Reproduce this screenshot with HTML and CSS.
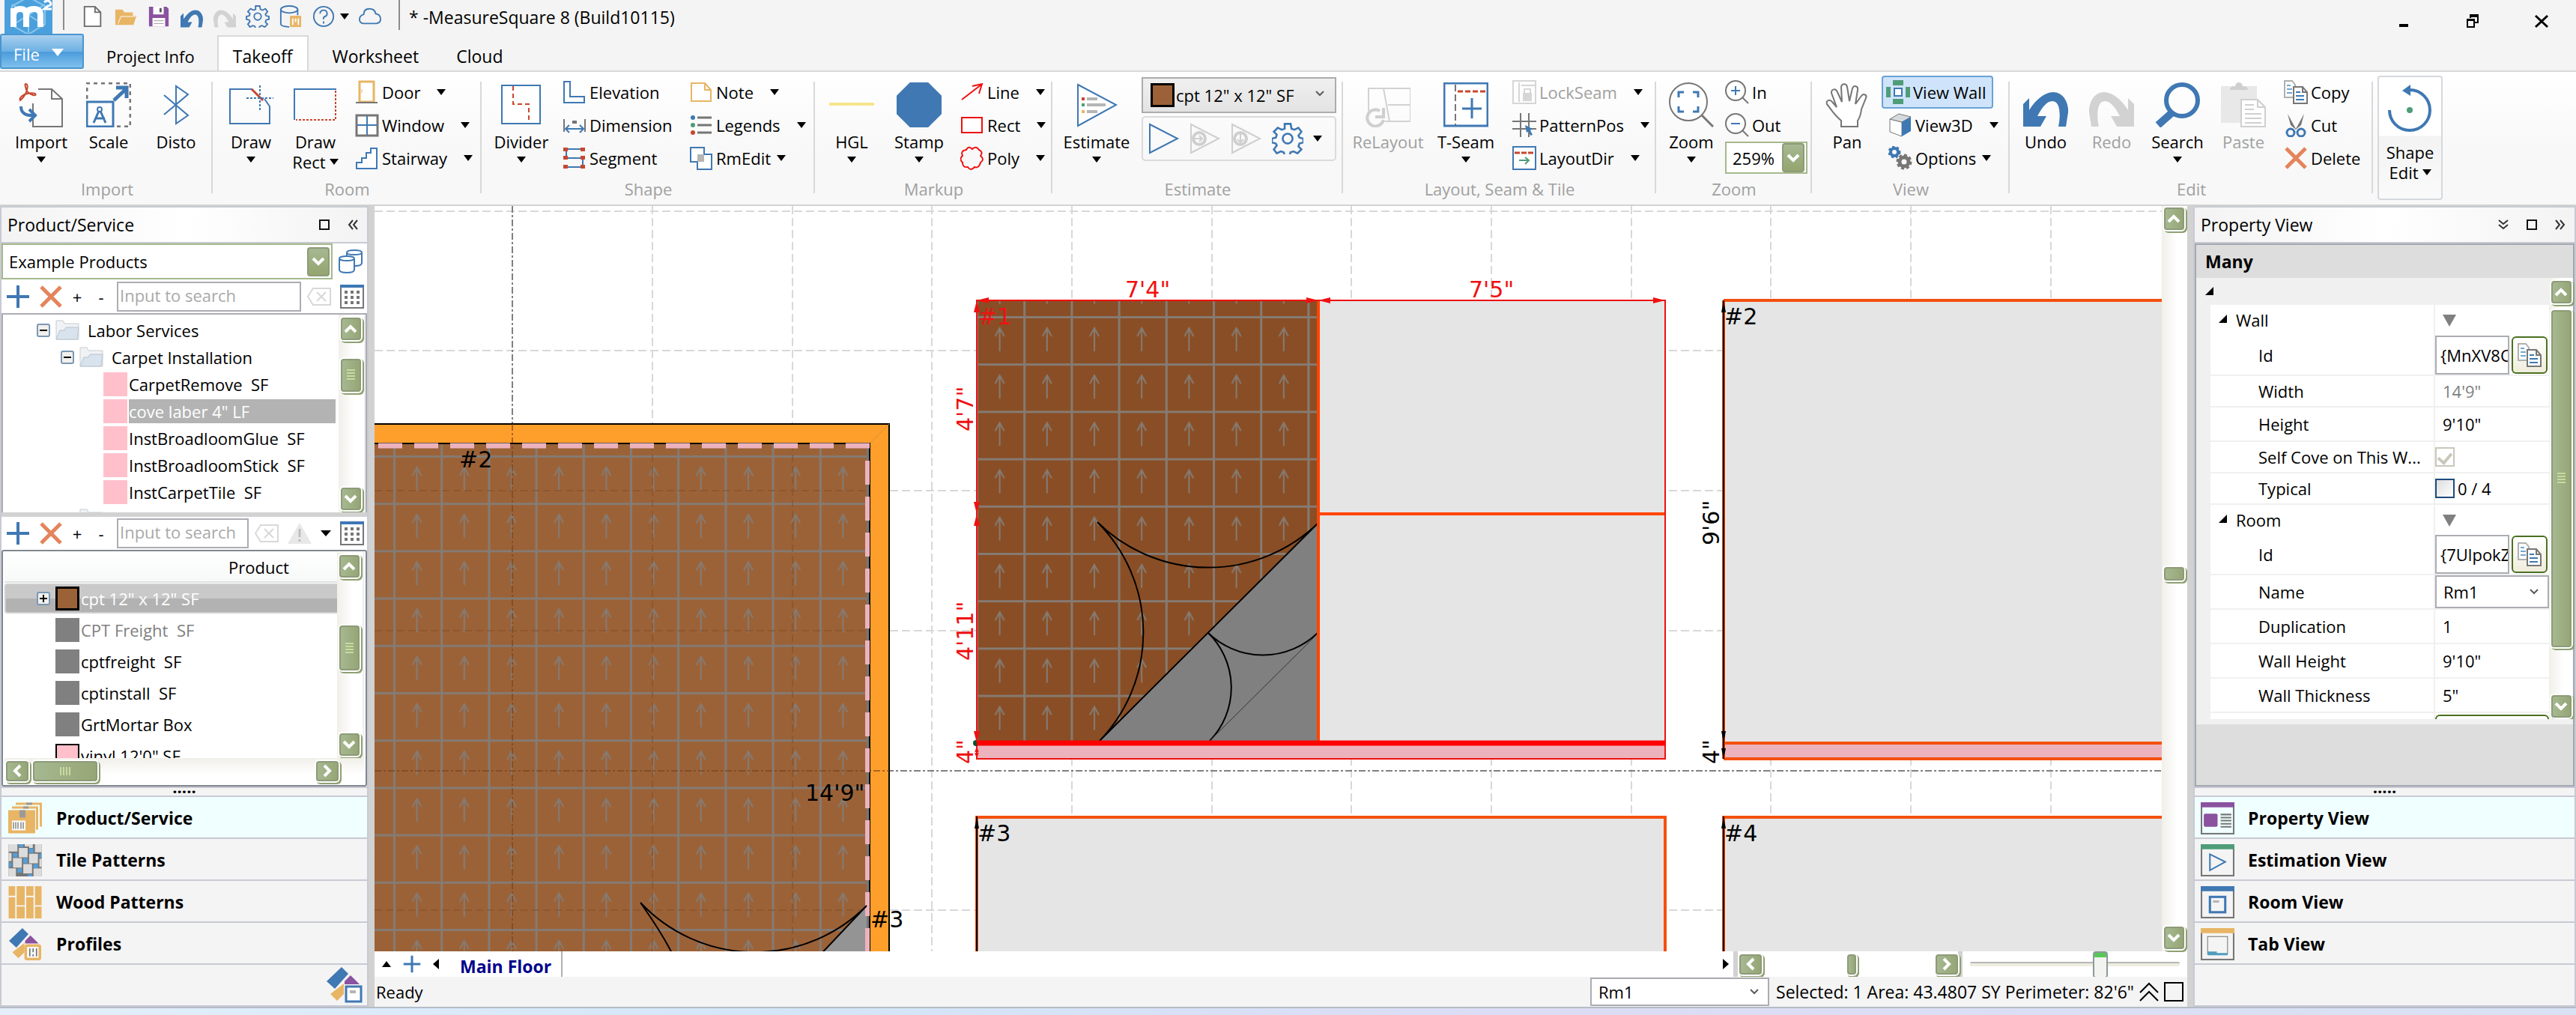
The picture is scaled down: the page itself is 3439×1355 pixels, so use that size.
FILE: index.html
```html
<!DOCTYPE html>
<html lang="en">
<head>
<meta charset="utf-8">
<title>MeasureSquare 8</title>
<link rel="stylesheet" href="styles.css">
</head>
<body>
<svg class="sprite" aria-hidden="true">
  <defs>
    <symbol id="i-logo" viewBox="0 0 64 45"><rect width="64" height="45" fill="#4aa0dc"/><path d="M10 34V8L32-4l22 12v24L32 46zM10 34l44-28M54 34L10 6M32 30v16" fill="none" stroke="#8cc6ec" stroke-width="2"/><path d="M12 36V11M12 20q1-8 9-8t8 8v16M29 20q1-8 10-8t9 8v16" fill="none" stroke="#fff" stroke-width="8"/><path d="M53 3q5-4 8 0t-3 5l-5 4h10" fill="none" stroke="#fff" stroke-width="3"/></symbol>
    <symbol id="i-new" viewBox="0 0 32 32"><path d="M4 2h15l8 8v20H4zM19 2v8h8" fill="#fff" stroke="#6b6b6b" stroke-width="2"/></symbol>
    <symbol id="i-open" viewBox="0 0 32 32"><path d="M1 28V6h10l3 4h12v5h5l-4 13z" fill="#e8b565"/><path d="M5 26l4-10h21" fill="none" stroke="#fff" stroke-width="1"/></symbol>
    <symbol id="i-save" viewBox="0 0 32 32"><path d="M2 2h25l3 3v25H2z" fill="#8a529f"/><path d="M8 2h15v11H8zM7 18h18v12H7z" fill="#fff"/><path d="M17 4h3v6h-3z" fill="#555"/><path d="M9 22h14M9 26h14" stroke="#999" stroke-width="1"/></symbol>
    <symbol id="i-undo" viewBox="0 0 60 60"><path d="M0 53V29l8-8v16C16 24 28 13 40 13c14 0 21 15 20 27l-3 19H47c3-14 3-34-8-34-8 0-14 9-20 20h12l-8 14H0z" fill="#3f78b3"/></symbol>
    <symbol id="i-redo" viewBox="0 0 60 60"><path d="M60 53V29l-8-8v16C44 24 32 13 20 13 6 13-1 28 0 40l3 19h10c-3-14-3-34 8-34 8 0 14 9 20 20H29l8 14h23z" fill="#d2d2d2"/></symbol>
    <symbol id="i-gear" viewBox="0 0 32 32"><path d="M13 1h6l1 5 3 1 4-2 3 4-3 4 1 2 4 1v4l-4 1-1 3 3 3-4 4-4-2-3 1-1 3h-5l-1-3-3-1-4 2-3-4 3-4-1-2-4-1v-4l4-1 1-3-3-3 4-4 4 2 3-1z" fill="none" stroke="#3f78b3" stroke-width="2"/><circle cx="16" cy="16" r="5" fill="none" stroke="#3f78b3" stroke-width="2"/></symbol>
    <symbol id="i-gears" viewBox="0 0 32 32"><circle cx="8" cy="8" r="5" fill="none" stroke="#3f78b3" stroke-width="4"/><circle cx="8" cy="8" r="7" fill="none" stroke="#3f78b3" stroke-width="3" stroke-dasharray="3 3"/><circle cx="21" cy="21" r="6" fill="none" stroke="#767676" stroke-width="5"/><circle cx="21" cy="21" r="9" fill="none" stroke="#767676" stroke-width="3" stroke-dasharray="4 3"/></symbol>
    <symbol id="i-dbcode" viewBox="0 0 32 32"><path d="M2 6v21q0 3 12 4M26 6v8" fill="none" stroke="#3f78b3" stroke-width="2"/><ellipse cx="14" cy="6" rx="12" ry="5" fill="none" stroke="#3f78b3" stroke-width="2"/><rect x="15" y="15" width="16" height="16" fill="#e8b565"/><path d="M19 19v9M23 19v5M27 19v9" stroke="#fff" stroke-width="2"/></symbol>
    <symbol id="i-help" viewBox="0 0 32 32"><circle cx="16" cy="16" r="14" fill="none" stroke="#3f78b3" stroke-width="2"/><path d="M11 12q0-5 5-5t5 5q0 3-3 4t-2 4M16 23v3" fill="none" stroke="#3f78b3" stroke-width="2"/></symbol>
    <symbol id="i-cloud" viewBox="0 0 32 32"><path d="M6 26q-5-1-5-6t6-7q0-8 8-8t9 7q7 1 7 8 0 5-6 6z" fill="none" stroke="#3f78b3" stroke-width="2"/></symbol>
    <symbol id="i-import" viewBox="0 0 60 60"><path d="M26 9h18l14 13v37H19V28M44 9v13h14" fill="none" stroke="#767676" stroke-width="2"/><path d="M9 2q4 0 2 8-2 8-9 14-2-4 6-8 8-3 14-1 2 3-3 2-9-3-10-11-1-4 0-4" fill="none" stroke="#c8472f" stroke-width="2"/><path d="M3 32q0 13 17 12M14 36l8 8-8 8" fill="none" stroke="#3f78b3" stroke-width="4"/></symbol>
    <symbol id="i-scale" viewBox="0 0 60 60"><path d="M1 22V1h58v58H40" fill="none" stroke="#767676" stroke-width="3" stroke-dasharray="5 5"/><rect x="1" y="26" width="35" height="33" fill="#fff" stroke="#3f78b3" stroke-width="3"/><path d="M37 24L52 10M40 7h14v14" fill="none" stroke="#3f78b3" stroke-width="5"/><path d="M10 54l8-18 8 18M12 48h13" fill="none" stroke="#3f78b3" stroke-width="3"/><circle cx="18" cy="36" r="3" fill="#fff" stroke="#3f78b3" stroke-width="2"/></symbol>
    <symbol id="i-bt" viewBox="0 0 60 60"><path d="M14 17l32 27-16 11V5l16 11-32 27" fill="none" stroke="#3f78b3" stroke-width="2"/></symbol>
    <symbol id="i-draw" viewBox="0 0 60 60"><path d="M32 9H2v46h53V32L48 22" fill="none" stroke="#3f78b3" stroke-width="2"/><path d="M31 9l15 15" stroke="#c8472f" stroke-width="3"/><path d="M42 4v34M24 21h36" stroke="#3f78b3" stroke-width="2" stroke-dasharray="3 2"/></symbol>
    <symbol id="i-rect" viewBox="0 0 60 60"><path d="M2 50V9h56" fill="none" stroke="#3f78b3" stroke-width="2"/><path d="M57 11v39H4" fill="none" stroke="#c8472f" stroke-width="2" stroke-dasharray="3 2"/></symbol>
    <symbol id="i-door" viewBox="0 0 32 32"><rect x="6" y="2" width="19" height="27" fill="#fff" stroke="#e8b565" stroke-width="3"/><path d="M9 12v5" stroke="#e8b565"/><path d="M1 30h29" stroke="#767676" stroke-width="2"/></symbol>
    <symbol id="i-window" viewBox="0 0 32 32"><rect x="2" y="3" width="28" height="27" fill="#fff" stroke="#767676" stroke-width="3"/><path d="M16 4v25M3 16h26" stroke="#3f78b3" stroke-width="2"/></symbol>
    <symbol id="i-stair" viewBox="0 0 32 32"><path d="M2 30V22h7v-6h6V9h6V3h8v27z" fill="#fff" stroke="#3f78b3" stroke-width="2"/></symbol>
    <symbol id="i-divider" viewBox="0 0 60 60"><rect x="4" y="4" width="51" height="51" fill="#fff" stroke="#3f78b3" stroke-width="2"/><path d="M19 5v24h21v25" fill="none" stroke="#c8472f" stroke-width="2" stroke-dasharray="6 4"/></symbol>
    <symbol id="i-elev" viewBox="0 0 32 32"><path d="M2 2h8v20h19v8H2z" fill="#fff" stroke="#3f78b3" stroke-width="2"/></symbol>
    <symbol id="i-dim" viewBox="0 0 32 32"><path d="M2 8v17M30 8v17" stroke="#767676" stroke-width="2"/><path d="M13 10h6v4h-6z" fill="#767676"/><path d="M5 21h22M9 16l-5 5 5 5M23 16l5 5-5 5" fill="none" stroke="#3f78b3" stroke-width="2"/></symbol>
    <symbol id="i-seg" viewBox="0 0 32 32"><path d="M27 4H5v12h22v12H5" fill="none" stroke="#3f78b3" stroke-width="2"/><path d="M1 2h6v5H1zM24 2h6v5h-6zM1 13h6v5H1zM24 13h6v5h-6zM1 25h6v5H1zM24 25h6v5h-6z" fill="#c8472f"/></symbol>
    <symbol id="i-note" viewBox="0 0 32 32"><path d="M3 4h18l8 9v15H3zM21 4v9h8" fill="#fff" stroke="#e8b565" stroke-width="2"/></symbol>
    <symbol id="i-legend" viewBox="0 0 32 32"><circle cx="5" cy="6" r="3" fill="#3f78b3"/><circle cx="5" cy="16" r="3" fill="#4f9d78"/><circle cx="5" cy="26" r="3" fill="#c8472f"/><path d="M11 6h19M11 16h19M11 26h19" stroke="#767676" stroke-width="3"/></symbol>
    <symbol id="i-rmedit" viewBox="0 0 32 32"><path d="M2 2h18v9h10v20H11V21H2z" fill="#fff" stroke="#3f78b3" stroke-width="2"/><path d="M11 11h9v10h-9z" fill="#b5b5b5"/></symbol>
    <symbol id="i-hgl" viewBox="0 0 60 60"><path d="M0 29h60" stroke="#f5e68c" stroke-width="4"/></symbol>
    <symbol id="i-stamp" viewBox="0 0 64 64"><path d="M19 0h26l19 19v26L45 64H19L0 45V19z" fill="#3f78b3"/></symbol>
    <symbol id="i-line" viewBox="0 0 32 32"><path d="M2 26L28 6M16 8l13-3-4 13" fill="none" stroke="#f01010" stroke-width="2"/></symbol>
    <symbol id="i-mrect" viewBox="0 0 32 32"><rect x="2" y="6" width="27" height="20" fill="#fff" stroke="#f01010" stroke-width="2"/></symbol>
    <symbol id="i-poly" viewBox="0 0 32 32"><path d="M8 5q3-6 8-1 5-5 9 1 6 3 2 8 6 5 0 9-2 8-8 6-5 6-9 0-7 1-7-6-5-5 0-9-3-7 5-8z" fill="none" stroke="#f01010" stroke-width="2"/></symbol>
    <symbol id="i-est" viewBox="0 0 60 60"><path d="M5 3l51 27L5 58z" fill="#fff" stroke="#3f78b3" stroke-width="2"/><path d="M10 22h4" stroke="#c8472f" stroke-width="4"/><path d="M10 30h4" stroke="#4f9d78" stroke-width="4"/><path d="M10 39h4" stroke="#e8b565" stroke-width="4"/><path d="M17 22h14M17 30h25M17 39h14" stroke="#b5b5b5" stroke-width="4"/></symbol>
    <symbol id="i-play" viewBox="0 0 42 42"><path d="M2 2l37 19L2 40z" fill="none" stroke="#3f78b3" stroke-width="2"/></symbol>
    <symbol id="i-playr" viewBox="0 0 42 42"><path d="M2 2l37 19L2 40z" fill="none" stroke="#cfcfcf" stroke-width="2"/><circle cx="13" cy="21" r="8" fill="none" stroke="#cfcfcf" stroke-width="4"/><path d="M7 21h10M13 17l4 4-4 4" fill="none" stroke="#cfcfcf" stroke-width="2"/></symbol>
    <symbol id="i-playd" viewBox="0 0 42 42"><path d="M2 2l37 19L2 40z" fill="none" stroke="#cfcfcf" stroke-width="2"/><circle cx="13" cy="21" r="8" fill="none" stroke="#cfcfcf" stroke-width="4"/><path d="M13 15v11M9 22l4 4 4-4" fill="none" stroke="#cfcfcf" stroke-width="2"/></symbol>
    <symbol id="i-relay" viewBox="0 0 60 60"><path d="M4 38V8h56v44H26M24 8l8 44M30 30h30M5 8h19" fill="none" stroke="#d2d2d2" stroke-width="2"/><path d="M19 38a11 11 0 1 0 5 12M24 34v12H13" fill="none" stroke="#cfcfcf" stroke-width="4"/></symbol>
    <symbol id="i-tseam" viewBox="0 0 60 60"><rect x="1" y="1" width="58" height="57" fill="#fff" stroke="#3f78b3" stroke-width="3"/><path d="M16 3v54" stroke="#767676" stroke-width="2" stroke-dasharray="9 4"/><path d="M19 12h40" stroke="#c8472f" stroke-width="3" stroke-dasharray="7 3"/><path d="M38 21v27M25 35h26" stroke="#3f78b3" stroke-width="3"/></symbol>
    <symbol id="i-lock" viewBox="0 0 32 32"><path d="M1 1h30v30H1zM9 3v26M12 7h18" fill="none" stroke="#d6d6d6" stroke-width="2"/><path d="M14 17h12v11H14z" fill="#d6d6d6"/><path d="M16 17v-5h8v5" fill="none" stroke="#d6d6d6" stroke-width="2"/></symbol>
    <symbol id="i-ppos" viewBox="0 0 32 32"><path d="M11 0v32M22 0v32M0 11h32M0 21h32" stroke="#767676" stroke-width="2"/><path d="M17 16l10 5-3 2 3 6-3 1-2-6-3 2z" fill="#3f78b3"/></symbol>
    <symbol id="i-ldir" viewBox="0 0 32 32"><rect x="1" y="1" width="30" height="30" fill="#fff" stroke="#3f78b3" stroke-width="2"/><path d="M3 9h27" stroke="#c8472f" stroke-width="3" stroke-dasharray="7 2"/><path d="M9 19h13M17 15l5 4-5 5" fill="none" stroke="#4f9d78" stroke-width="2"/></symbol>
    <symbol id="i-zoom" viewBox="0 0 60 60"><circle cx="26" cy="26" r="25" fill="#fff" stroke="#767676" stroke-width="2"/><path d="M44 44l15 15" stroke="#767676" stroke-width="3"/><path d="M13 20v-7h7M32 13h7v7M39 32v7h-7M20 39h-7v-7" fill="none" stroke="#3f78b3" stroke-width="3"/></symbol>
    <symbol id="i-zin" viewBox="0 0 32 32"><circle cx="14" cy="14" r="13" fill="#fff" stroke="#767676" stroke-width="2"/><path d="M23 23l8 8" stroke="#767676" stroke-width="2"/><path d="M14 8v12M8 14h12" stroke="#3f78b3" stroke-width="2"/></symbol>
    <symbol id="i-zout" viewBox="0 0 32 32"><circle cx="14" cy="14" r="13" fill="#fff" stroke="#767676" stroke-width="2"/><path d="M23 23l8 8" stroke="#767676" stroke-width="2"/><path d="M8 14h12" stroke="#3f78b3" stroke-width="2"/></symbol>
    <symbol id="i-pan" viewBox="0 0 60 60"><path d="M22 59V51C12 43 8 35 3 29c-2-5 4-7 7-3l6 7L9 14c0-6 6-6 8-1l6 13L22 6c1-5 7-5 8 0l3 19 4-17c2-5 8-3 7 2l-3 19 8-11c3-4 8-1 6 3L49 36c-1 8-2 11-5 15v8z" fill="#fff" stroke="#767676" stroke-width="2"/></symbol>
    <symbol id="i-vwall" viewBox="0 0 32 32"><path d="M9 0h14v7H9zM9 25h14v7H9zM0 9h6v14H0zM26 9h6v14h-6z" fill="#4f9d78"/><rect x="11" y="11" width="10" height="10" fill="#fff" stroke="#3f78b3" stroke-width="2"/></symbol>
    <symbol id="i-cube" viewBox="0 0 32 32"><path d="M2 8l16 4v19L2 25z" fill="#fff" stroke="#767676"/><path d="M2 8l12-7 16 4-12 7z" fill="#d5dadd" stroke="#767676"/><path d="M18 12l12-7v19l-12 7z" fill="#3f78b3"/></symbol>
    <symbol id="i-search" viewBox="0 0 60 60"><circle cx="36" cy="24" r="21" fill="none" stroke="#3f78b3" stroke-width="6"/><path d="M22 41L4 57" stroke="#3f78b3" stroke-width="10"/></symbol>
    <symbol id="i-paste" viewBox="0 0 60 60"><path d="M0 5h48v49H0z" fill="#e8e8e8"/><path d="M12 10q0-5 7-5 1-5 5-5t5 5q7 0 7 5z" fill="#cfcfcf"/><path d="M27 23h22l10 10v26H27zM49 23v10h10M32 30h12M32 36h12M32 42h22M32 48h22M32 54h22" fill="#fff" stroke="#cfcfcf" stroke-width="2"/></symbol>
    <symbol id="i-copy" viewBox="0 0 32 32"><path d="M1 1h10l4 5v17H1z" fill="#fff" stroke="#b0b0b0" stroke-width="2"/><path d="M4 7h5M4 12h7M4 17h7" stroke="#6fa8d2" stroke-width="2"/><path d="M13 9h12l6 7v15H13zM25 9v7h6" fill="#fff" stroke="#767676" stroke-width="2"/><path d="M16 16h6M16 21h11M16 26h11" stroke="#3f78b3" stroke-width="2"/></symbol>
    <symbol id="i-cut" viewBox="0 0 32 32"><path d="M5 1l11 20L27 1l-4 15-7 6-7-6z" fill="#767676"/><circle cx="9" cy="26" r="5" fill="none" stroke="#3f78b3" stroke-width="3"/><circle cx="23" cy="26" r="5" fill="none" stroke="#3f78b3" stroke-width="3"/></symbol>
    <symbol id="i-x" viewBox="0 0 32 32"><path d="M3 3l26 26M29 3L3 29" stroke="#e4845c" stroke-width="5"/></symbol>
    <symbol id="i-plus" viewBox="0 0 32 32"><path d="M16 1v30M1 16h30" stroke="#3f78b3" stroke-width="4"/></symbol>
    <symbol id="i-rotate" viewBox="0 0 60 64"><path d="M29 7a27 27 0 1 1-27 27" fill="none" stroke="#3f78b3" stroke-width="4"/><path d="M19 8l11-8v15z" fill="#3f78b3"/><circle cx="29" cy="34" r="4" fill="#4f9d78"/></symbol>
    <symbol id="i-dbs" viewBox="0 0 32 32"><path d="M11 9V4q0-3 10-3t10 3v14q0 4-9 4" fill="none" stroke="#3f78b3" stroke-width="2"/><path d="M11 4q0 3 10 3t10-3" fill="none" stroke="#3f78b3" stroke-width="2"/><path d="M1 13v14q0 4 10 4t10-4V13" fill="none" stroke="#3f78b3" stroke-width="2"/><ellipse cx="11" cy="12" rx="10" ry="3" fill="#fff" stroke="#3f78b3" stroke-width="2"/></symbol>
    <symbol id="i-table" viewBox="0 0 32 32"><path d="M1 3v28h30V3" fill="#fff" stroke="#767676" stroke-width="2"/><path d="M0 2h32" stroke="#3f78b3" stroke-width="4"/><path d="M6 10h21M6 17h21M6 24h21" stroke="#767676" stroke-width="4" stroke-dasharray="4 4"/></symbol>
    <symbol id="i-clear" viewBox="0 0 32 32"><path d="M8 5h23v22H8L1 16zM13 10l12 12M25 10L13 22" fill="none" stroke="#d8d8d8" stroke-width="2"/></symbol>
    <symbol id="i-warn" viewBox="0 0 32 32"><path d="M16 2l16 28H0z" fill="#e8e8e8"/><path d="M16 10v11M16 24v3" stroke="#bdbdbd" stroke-width="3"/></symbol>
    <symbol id="i-folder" viewBox="0 0 32 32"><path d="M1 28V3h9l2 4h19v21z" fill="#f0f2f5" stroke="#c7ccd2" stroke-width="1"/><path d="M1 28l5-12h6l2-4h17l-2 16z" fill="#d8e3ee" stroke="#b8c4d0" stroke-width="1"/></symbol>
    <symbol id="i-minus-box" viewBox="0 0 18 18"><rect x="1" y="1" width="16" height="16" rx="2" fill="#f1f0ec" stroke="#7a98b5" stroke-width="2"/><path d="M4 9h10" stroke="#000" stroke-width="2"/></symbol>
    <symbol id="i-plus-box" viewBox="0 0 18 18"><rect x="1" y="1" width="16" height="16" rx="2" fill="#f1f0ec" stroke="#7a98b5" stroke-width="2"/><path d="M4 9h10M9 4v10" stroke="#000" stroke-width="2"/></symbol>
    <symbol id="i-up" viewBox="0 0 18 14"><path d="M2 11l7-7 7 7" fill="none" stroke="#fff" stroke-width="4"/></symbol>
    <symbol id="i-down" viewBox="0 0 18 14"><path d="M2 3l7 7 7-7" fill="none" stroke="#fff" stroke-width="4"/></symbol>
    <symbol id="i-left" viewBox="0 0 14 18"><path d="M11 2L4 9l7 7" fill="none" stroke="#fff" stroke-width="4"/></symbol>
    <symbol id="i-right" viewBox="0 0 14 18"><path d="M3 2l7 7-7 7" fill="none" stroke="#fff" stroke-width="4"/></symbol>
    <symbol id="i-caret" viewBox="0 0 12 10"><path d="M1 2l5 5 5-5" fill="none" stroke="#5c5c5c" stroke-width="2"/></symbol>
    <symbol id="i-sq" viewBox="0 0 14 14"><rect x="1" y="1" width="12" height="12" fill="none" stroke="#111" stroke-width="2"/></symbol>
    <symbol id="i-ll" viewBox="0 0 14 14"><path d="M7 1L2 7l5 6M13 1L8 7l5 6" fill="none" stroke="#333" stroke-width="2"/></symbol>
    <symbol id="i-rr" viewBox="0 0 14 14"><path d="M1 1l5 6-5 6M7 1l5 6-5 6" fill="none" stroke="#333" stroke-width="2"/></symbol>
    <symbol id="i-dd" viewBox="0 0 14 14"><path d="M1 1l6 5 6-5M1 7l6 5 6-5" fill="none" stroke="#333" stroke-width="2"/></symbol>
    <symbol id="i-boxes" viewBox="0 0 45 42"><path d="M10 0h35v32h-3V3H10zM5 5h35v31h-3V8H5zM0 10h36v31H0z" fill="#e8b565"/><path d="M15 10h8v10h-8zM24 0h8v3h-8zM20 5h7v3h-7z" fill="#9a9a9a"/><path d="M5 24h18v13H5z" fill="#fff"/><path d="M7 26v9M10 26v9M13 26v9M17 26v9M20 26v9" stroke="#444"/></symbol>
    <symbol id="i-tiles" viewBox="0 0 45 44"><rect width="45" height="44" fill="#767676"/><path d="M0 0h12v10H0zM14 5h12v13H14zM28 13h12v13H28zM6 19h12v13H6zM20 27h12v13H20zM22 0h11v5H28V3h-6zM36 0h9v11h-9zM34 33h11v11H34zM0 33h10v11H0zM42 20h3v11h-3zM0 12h4v11H0z" fill="#dcdcdc"/><path d="M14 0h6v4h-6zM28 6h6v6h-6zM6 12h6v6H6zM20 19h6v7h-6zM34 27h6v6h-6zM12 33h6v6h-6zM42 13h3v6h-3zM0 25h4v6H0zM26 41h6v3h-6z" fill="#539fdb"/></symbol>
    <symbol id="i-wood" viewBox="0 0 45 44"><path d="M0 0h9v13H0zM0 15h9v29H0zM11 0h11v26H11zM11 28h11v16H11zM24 0h10v13H24zM24 15h10v29H24zM36 0h9v26h-9zM36 28h9v16h-9z" fill="#e8b565"/></symbol>
    <symbol id="i-prof" viewBox="0 0 48 48"><path d="M0 19L20 0l9 9L11 29z" fill="#3f78b3"/><path d="M24 19l8-8 12 12H24z" fill="#8a529f"/><path d="M5 36l18-14v14L14 45z" fill="#e8b565"/><rect x="25" y="26" width="21" height="20" rx="2" fill="#fff" stroke="#e8b565" stroke-width="4"/><path d="M31 30v12M36 30v6M36 39v3M41 30v12" stroke="#767676" stroke-width="2"/></symbol>
    <symbol id="i-prof2" viewBox="0 0 48 48"><path d="M0 19L20 0l9 9L11 29z" fill="#3f78b3"/><path d="M24 19l8-8 12 12H24z" fill="#8a529f"/><path d="M5 36l18-14v14L14 45z" fill="#e8b565"/><rect x="26" y="26" width="20" height="20" fill="#fff" stroke="#3f78b3" stroke-width="3"/><path d="M31 33h8" stroke="#b5b5b5" stroke-width="4"/></symbol>
    <symbol id="i-pv" viewBox="0 0 44 42"><rect x="1" y="1" width="42" height="40" fill="none" stroke="#767676" stroke-width="2"/><path d="M0 3h44" stroke="#8a529f" stroke-width="7"/><rect x="4" y="15" width="18" height="17" rx="2" fill="#8a529f"/><path d="M26 16h14M26 20h14M26 24h14M26 28h14M26 32h14" stroke="#767676" stroke-width="2"/></symbol>
    <symbol id="i-ev" viewBox="0 0 44 42"><rect x="1" y="1" width="42" height="40" fill="none" stroke="#767676" stroke-width="2"/><path d="M0 3h44" stroke="#4f9d78" stroke-width="7"/><path d="M12 13l20 10-20 11z" fill="none" stroke="#3f78b3" stroke-width="2"/></symbol>
    <symbol id="i-rv" viewBox="0 0 44 42"><rect x="1" y="1" width="42" height="40" fill="none" stroke="#767676" stroke-width="2"/><path d="M0 3h44" stroke="#3f78b3" stroke-width="7"/><rect x="12" y="14" width="20" height="20" fill="none" stroke="#3f78b3" stroke-width="3"/><path d="M16 20h8" stroke="#b5b5b5" stroke-width="3"/></symbol>
    <symbol id="i-tv" viewBox="0 0 44 42"><rect x="1" y="1" width="42" height="40" fill="none" stroke="#767676" stroke-width="2"/><path d="M0 3h44" stroke="#e8b565" stroke-width="7"/><rect x="9" y="11" width="26" height="23" fill="none" stroke="#767676"/><path d="M9 34h26M9 32h12" stroke="#4f9dbd" stroke-width="3"/></symbol>
  </defs>
</svg>

<header class="titlebar">
  <svg class="logo" aria-label="MeasureSquare"><use href="#i-logo"/></svg>
  <div class="quick">
    <button class="ib" aria-label="New"><svg class="ic"><use href="#i-new"/></svg></button>
    <button class="ib" aria-label="Open"><svg class="ic"><use href="#i-open"/></svg></button>
    <button class="ib" aria-label="Save"><svg class="ic"><use href="#i-save"/></svg></button>
    <button class="ib" aria-label="Undo"><svg class="ic"><use href="#i-undo"/></svg></button>
    <button class="ib" aria-label="Redo"><svg class="ic"><use href="#i-redo"/></svg></button>
    <button class="ib" aria-label="Settings"><svg class="ic"><use href="#i-gear"/></svg></button>
    <button class="ib" aria-label="Product database"><svg class="ic"><use href="#i-dbcode"/></svg></button>
    <button class="ib help" aria-label="Help"><svg class="ic"><use href="#i-help"/></svg><i class="tri"></i></button>
    <button class="ib" aria-label="Cloud"><svg class="ic"><use href="#i-cloud"/></svg></button>
  </div>
  <h1>* -MeasureSquare 8 (Build10115)</h1>
  <div class="winctl">
    <button class="ib" aria-label="Minimize"><svg viewBox="0 0 20 20"><path d="M4 16h12" stroke="#000" stroke-width="4"/></svg></button>
    <button class="ib" aria-label="Restore"><svg viewBox="0 0 20 20"><path d="M7 6V2h10v10h-4" fill="none" stroke="#000" stroke-width="2"/><path d="M6 1h12v4H6z"/><path d="M3 8h9v10H3z" fill="#f5f5f5" stroke="#000" stroke-width="2"/><path d="M2 7h11v3H2z"/></svg></button>
    <button class="ib" aria-label="Close"><svg viewBox="0 0 20 20"><path d="M2 3l16 15M18 3L2 18" stroke="#000" stroke-width="3"/></svg></button>
  </div>
</header>

<nav class="tabs">
  <button class="file">File <i class="tri"></i></button>
  <button class="tab t-info">Project Info</button>
  <button class="tab active">Takeoff</button>
  <button class="tab">Worksheet</button>
  <button class="tab">Cloud</button>
</nav>

<section class="ribbon" aria-label="Takeoff ribbon">
  <div class="group g-import">
    <div class="items">
      <button class="lg w90"><svg><use href="#i-import"/></svg><span>Import</span><i class="tri"></i></button>
      <button class="lg w90"><svg><use href="#i-scale"/></svg><span>Scale</span></button>
      <button class="lg w90"><svg><use href="#i-bt"/></svg><span>Disto</span></button>
    </div>
    <h2>Import</h2>
  </div>
  <div class="group g-room">
    <div class="items">
      <button class="lg w86"><svg><use href="#i-draw"/></svg><span>Draw</span><i class="tri"></i></button>
      <button class="lg w86"><svg><use href="#i-rect"/></svg><span>Draw</span><span class="two">Rect <i class="tri"></i></span></button>
      <div class="stack">
        <button class="sm"><svg class="ic"><use href="#i-door"/></svg>Door<i class="tri"></i></button>
        <button class="sm"><svg class="ic"><use href="#i-window"/></svg>Window<i class="tri"></i></button>
        <button class="sm"><svg class="ic"><use href="#i-stair"/></svg>Stairway<i class="tri"></i></button>
      </div>
    </div>
    <h2>Room</h2>
  </div>
  <div class="group g-shape">
    <div class="items">
      <button class="lg w90"><svg><use href="#i-divider"/></svg><span>Divider</span><i class="tri"></i></button>
      <div class="stack s-elev">
        <button class="sm"><svg class="ic"><use href="#i-elev"/></svg>Elevation</button>
        <button class="sm"><svg class="ic"><use href="#i-dim"/></svg>Dimension</button>
        <button class="sm"><svg class="ic"><use href="#i-seg"/></svg>Segment</button>
      </div>
      <div class="stack s-note">
        <button class="sm"><svg class="ic"><use href="#i-note"/></svg>Note<i class="tri"></i></button>
        <button class="sm"><svg class="ic"><use href="#i-legend"/></svg>Legends<i class="tri"></i></button>
        <button class="sm near"><svg class="ic"><use href="#i-rmedit"/></svg>RmEdit<i class="tri"></i></button>
      </div>
    </div>
    <h2>Shape</h2>
  </div>
  <div class="group tight g-markup">
    <div class="items">
      <button class="lg w90"><svg><use href="#i-hgl"/></svg><span>HGL</span><i class="tri"></i></button>
      <button class="lg w90"><svg><use href="#i-stamp"/></svg><span>Stamp</span><i class="tri"></i></button>
      <div class="stack">
        <button class="sm"><svg class="ic"><use href="#i-line"/></svg>Line<i class="tri"></i></button>
        <button class="sm"><svg class="ic"><use href="#i-mrect"/></svg>Rect<i class="tri"></i></button>
        <button class="sm"><svg class="ic"><use href="#i-poly"/></svg>Poly<i class="tri"></i></button>
      </div>
    </div>
    <h2>Markup</h2>
  </div>
  <div class="group tight g-est">
    <div class="items">
      <button class="lg w110"><svg><use href="#i-est"/></svg><span>Estimate</span><i class="tri"></i></button>
      <div class="estbox">
        <label class="prodsel"><i class="swatch brown"></i><select aria-label="Product"><option>cpt 12" x 12" SF</option></select><svg><use href="#i-caret"/></svg></label>
        <div class="esttools">
          <button class="ib" aria-label="Run"><svg><use href="#i-play"/></svg></button>
          <button class="ib" aria-label="Run right" disabled><svg><use href="#i-playr"/></svg></button>
          <button class="ib" aria-label="Run down" disabled><svg><use href="#i-playd"/></svg></button>
          <button class="ib" aria-label="Estimate options"><svg><use href="#i-gear"/></svg></button>
          <i class="tri"></i>
        </div>
      </div>
    </div>
    <h2>Estimate</h2>
  </div>
  <div class="group g-layout">
    <div class="items">
      <button class="lg w104" disabled><svg><use href="#i-relay"/></svg><span>ReLayout</span></button>
      <button class="lg w104"><svg><use href="#i-tseam"/></svg><span>T-Seam</span><i class="tri"></i></button>
      <div class="stack">
        <button class="sm off"><svg class="ic"><use href="#i-lock"/></svg>LockSeam<i class="tri"></i></button>
        <button class="sm"><svg class="ic"><use href="#i-ppos"/></svg>PatternPos<i class="tri"></i></button>
        <button class="sm"><svg class="ic"><use href="#i-ldir"/></svg>LayoutDir<i class="tri"></i></button>
      </div>
    </div>
    <h2>Layout, Seam &amp; Tile</h2>
  </div>
  <div class="group tight g-zoom">
    <div class="items">
      <button class="lg w86"><svg><use href="#i-zoom"/></svg><span>Zoom</span><i class="tri"></i></button>
      <div class="stack">
        <button class="sm"><svg class="ic"><use href="#i-zin"/></svg>In</button>
        <button class="sm"><svg class="ic"><use href="#i-zout"/></svg>Out</button>
        <label class="combo zoomsel"><select aria-label="Zoom level"><option>259%</option></select><span class="gbtn"><svg><use href="#i-down"/></svg></span></label>
      </div>
    </div>
    <h2>Zoom</h2>
  </div>
  <div class="group tight g-view">
    <div class="items">
      <button class="lg w86"><svg><use href="#i-pan"/></svg><span>Pan</span></button>
      <div class="stack">
        <button class="sm on"><svg class="ic"><use href="#i-vwall"/></svg>View Wall</button>
        <button class="sm v"><svg class="ic"><use href="#i-cube"/></svg>View3D<i class="tri"></i></button>
        <button class="sm v near"><svg class="ic"><use href="#i-gears"/></svg>Options<i class="tri"></i></button>
      </div>
    </div>
    <h2>View</h2>
  </div>
  <div class="group tight g-edit">
    <div class="items">
      <button class="lg w88"><svg><use href="#i-undo"/></svg><span>Undo</span></button>
      <button class="lg w88" disabled><svg><use href="#i-redo"/></svg><span>Redo</span></button>
      <button class="lg w88"><svg><use href="#i-search"/></svg><span>Search</span><i class="tri"></i></button>
      <button class="lg w88" disabled><svg><use href="#i-paste"/></svg><span>Paste</span></button>
      <div class="stack">
        <button class="sm"><svg class="ic"><use href="#i-copy"/></svg>Copy</button>
        <button class="sm"><svg class="ic"><use href="#i-cut"/></svg>Cut</button>
        <button class="sm"><svg class="ic"><use href="#i-x"/></svg>Delete</button>
      </div>
    </div>
    <h2>Edit</h2>
  </div>
  <button class="lg shapeedit"><svg><use href="#i-rotate"/></svg><span>Shape</span><span class="two">Edit <i class="tri"></i></span></button>
</section>

<div class="workspace">
  <aside class="panel left">
    <header class="phead"><h2>Product/Service</h2><button class="ib" aria-label="Maximize"><svg><use href="#i-sq"/></svg></button><button class="ib" aria-label="Collapse"><svg><use href="#i-ll"/></svg></button></header>
    <div class="dbrow">
      <label class="combo"><select aria-label="Product database"><option>Example Products</option></select><span class="gbtn"><svg><use href="#i-down"/></svg></span></label>
      <button class="ib" aria-label="Databases"><svg class="ic"><use href="#i-dbs"/></svg></button>
    </div>
    <div class="tools">
      <button class="ib" aria-label="Add"><svg class="ic"><use href="#i-plus"/></svg></button>
      <button class="ib" aria-label="Remove"><svg class="ic"><use href="#i-x"/></svg></button>
      <button class="txt">+</button><button class="txt">-</button>
      <input type="text" placeholder="Input to search" aria-label="Search services">
      <button class="ib" aria-label="Clear search"><svg class="ic"><use href="#i-clear"/></svg></button>
      <button class="ib" aria-label="Columns"><svg class="ic"><use href="#i-table"/></svg></button>
    </div>
    <div class="tree">
      <ul>
        <li class="l1"><svg class="ex"><use href="#i-minus-box"/></svg><svg class="ic"><use href="#i-folder"/></svg>Labor Services</li>
        <li class="l2"><svg class="ex"><use href="#i-minus-box"/></svg><svg class="ic"><use href="#i-folder"/></svg>Carpet Installation</li>
        <li class="leaf"><i class="swatch pink"></i><span>CarpetRemove  SF</span></li>
        <li class="leaf sel"><i class="swatch pink"></i><span>cove laber 4" LF</span></li>
        <li class="leaf"><i class="swatch pink"></i><span>InstBroadloomGlue  SF</span></li>
        <li class="leaf"><i class="swatch pink"></i><span>InstBroadloomStick  SF</span></li>
        <li class="leaf"><i class="swatch pink"></i><span>InstCarpetTile  SF</span></li>
        <li class="l2"><svg class="ex"><use href="#i-minus-box"/></svg><svg class="ic"><use href="#i-folder"/></svg></li>
      </ul>
      <div class="vsb"><button class="gbtn" aria-label="Scroll up"><svg><use href="#i-up"/></svg></button><span class="gbtn thumb t44"></span><button class="gbtn" aria-label="Scroll down"><svg><use href="#i-down"/></svg></button></div>
    </div>
    <div class="tools second">
      <button class="ib" aria-label="Add product"><svg class="ic"><use href="#i-plus"/></svg></button>
      <button class="ib" aria-label="Remove product"><svg class="ic"><use href="#i-x"/></svg></button>
      <button class="txt">+</button><button class="txt">-</button>
      <input type="text" placeholder="Input to search" aria-label="Search products">
      <button class="ib gap" aria-label="Clear search"><svg class="ic"><use href="#i-clear"/></svg></button>
      <button class="ib gap" aria-label="Warnings"><svg class="ic"><use href="#i-warn"/></svg></button>
      <i class="tri wide"></i>
      <button class="ib" aria-label="Columns"><svg class="ic"><use href="#i-table"/></svg></button>
    </div>
    <div class="products">
      <div class="prow">
        <div class="plist">
          <table>
            <thead><tr><th>Product</th></tr></thead>
            <tbody>
              <tr class="sel"><td><div><svg class="ex"><use href="#i-plus-box"/></svg><i class="swatch brown"></i>cpt 12" x 12" SF</div></td></tr>
              <tr class="dim"><td><div><i class="swatch gray"></i>CPT Freight  SF</div></td></tr>
              <tr><td><div><i class="swatch gray"></i>cptfreight  SF</div></td></tr>
              <tr><td><div><i class="swatch gray"></i>cptinstall  SF</div></td></tr>
              <tr><td><div><i class="swatch gray"></i>GrtMortar Box</div></td></tr>
              <tr><td><div><i class="swatch pink bordered"></i>vinyl 12'0" SF</div></td></tr>
            </tbody>
          </table>
        </div>
        <div class="vsb"><button class="gbtn" aria-label="Scroll up"><svg><use href="#i-up"/></svg></button><span class="gbtn thumb t74"></span><button class="gbtn" aria-label="Scroll down"><svg><use href="#i-down"/></svg></button></div>
      </div>
      <div class="hsb"><button class="gbtn" aria-label="Scroll left"><svg class="h"><use href="#i-left"/></svg></button><span class="gbtn thumb h86"></span><button class="gbtn end" aria-label="Scroll right"><svg class="h"><use href="#i-right"/></svg></button></div>
    </div>
    <div class="dots">·····</div>
    <nav class="pnav">
      <button class="cur"><svg><use href="#i-boxes"/></svg>Product/Service</button>
      <button><svg><use href="#i-tiles"/></svg>Tile Patterns</button>
      <button><svg><use href="#i-wood"/></svg>Wood Patterns</button>
      <button><svg><use href="#i-prof"/></svg>Profiles</button>
      <div class="foot"><button class="ib" aria-label="Profile list"><svg><use href="#i-prof2"/></svg></button></div>
    </nav>
  </aside>
  <div class="split"></div>

  <main class="center">
    <div class="stagerow">
      <svg class="stage" role="img" aria-label="Floor plan with wall elevations">
        <defs>
          <g id="tilemark"><path d="M0 0H64M0 0V64" fill="none" stroke="#857b73" stroke-width="6"/><path d="M31.6 16V47M25.6 27l6-11 6 11" fill="none" stroke="#857b73" stroke-width="2"/></g>
          <pattern id="tileA" patternUnits="userSpaceOnUse" x="525" y="608" width="63.2" height="63.2"><use href="#tilemark"/></pattern>
          <pattern id="tileB" patternUnits="userSpaceOnUse" x="1303" y="422" width="63.2" height="63.2"><use href="#tilemark"/></pattern>
        </defs>
        <g transform="translate(-500 -275)">
          <path class="grid" d="M871 275V1280M1058 275V1280M1244 275V1280M1431 275V1280M1618 275V1280M1804 275V1280M1991 275V1280M2178 275V1280M2364 275V1280M2551 275V1280M2738 275V1280M500 282H4000M500 468H4000M500 655H4000M500 842H4000M500 1215H4000"/>
          <path class="axis" d="M684 275V1280M500 1029H4000"/>

          <path d="M490 566H1187V1400H490z" fill="#ff9f2b" stroke="#000" stroke-width="2"/>
          <path d="M1187 566l-26 26" stroke="#d9902c"/>
          <path d="M490 592H1161V1400H490z" fill="#9b6238"/>
          <path d="M490 592H1161V1400H490z" fill="url(#tileA)"/>
          <path d="M684 566V1280M500 1029H1187" fill="none" stroke="#774018" stroke-width="2" stroke-dasharray="9 3 3 3" opacity=".6"/>
          <path d="M871 592V1280M1058 592V1280M500 655H1161M500 842H1161M500 1215H1161" fill="none" stroke="#854c22" stroke-width="2" stroke-dasharray="10 5" opacity=".5"/>
          <path d="M1157 1209L1090 1280H1157z" fill="#949494"/>
          <path d="M1159 594V1280" stroke="#777" stroke-width="4"/>
          <path d="M490 592H1161V1400" fill="none" stroke="#000" stroke-width="2"/>
          <path d="M505 595H1161" stroke="#ecb3bd" stroke-width="7" stroke-dasharray="32 16"/>
          <path d="M1158 615V1280" stroke="#ecb3bd" stroke-width="6" stroke-dasharray="32 16"/>
          <path class="ink" d="M855 1205A210 210 0 0 0 1157 1209L1090 1280M855 1205Q884 1246 899 1276"/>
          <text x="613" y="624">#2</text>
          <text x="1075" y="1069">14'9"</text>
          <text x="1162" y="1238">#3</text>

          <path d="M1304 401H1760V992H1304z" fill="#894e25"/>
          <path d="M1304 401H1760V992H1304z" fill="url(#tileB)"/>
          <path d="M1760 401H2223V992H1760z" fill="#e5e5e5"/>
          <path d="M1760 698L1467 990H1760z" fill="#808080"/>
          <path class="ink" d="M1760 698L1467 990M1465 697A211 211 0 0 0 1760 698M1465 697A208 208 0 0 1 1467 990M1612 844A105 105 0 0 0 1759 845M1612 844A102 102 0 0 1 1615 989"/>
          <path d="M1759 846L1615 989" stroke="#333"/>
          <path d="M1760 401V992M1760 686H2223" stroke="#ff4500" stroke-width="4"/>
          <path d="M1304 992H2223V1013H1304z" fill="#ecb3bd"/>
          <path d="M1304 401H2223V1013H1304z" fill="none" stroke="#f01010" stroke-width="2"/>
          <circle cx="1303" cy="992" r="4" fill="#105030"/>
          <path d="M1304 992H2223" stroke="#f00" stroke-width="7"/>
          <path d="M1304 401l16-4v8zM1760 401l-16-4v8zM1760 401l16-4v8zM2223 401l-16-4v8zM1304 401l-4 16h8zM1304 686l-4-16h8zM1304 686l-4 16h8zM1304 992l-4-16h8zM1304 996l-3 9h6zM1304 1013l-3-9h6z" fill="#f01010"/>
          <g class="red">
            <text x="1306" y="433">#1</text>
            <text x="1502" y="397">7'4"</text>
            <text x="1961" y="397">7'5"</text>
            <text transform="translate(1299 576) rotate(-90)">4'7"</text>
            <text transform="translate(1299 882) rotate(-90)">4'11"</text>
            <text transform="translate(1299 1020) rotate(-90)">4"</text>
          </g>

          <path d="M2301 401H4000V992H2301z" fill="#e5e5e5"/>
          <path d="M2301 992H4000V1013H2301z" fill="#ecb3bd"/>
          <path d="M2301 401H4000M2301 992H4000M2301 1013H4000M2301 401V1013" fill="none" stroke="#f4500f" stroke-width="4"/>
          <path d="M2301 401V1013" stroke="#000" stroke-width="2"/>
          <path d="M2301 401l-3 16h6zM2301 992l-3-16h6zM2301 1013l-3-14h6z"/>
          <text x="2302" y="433">#2</text>
          <text transform="translate(2295 728) rotate(-90)">9'6"</text>
          <text transform="translate(2295 1020) rotate(-90)">4"</text>

          <path d="M1304 1091H2223V1400H1304z" fill="#e5e5e5" stroke="#f4500f" stroke-width="4"/>
          <path d="M2301 1091H4000V1400H2301z" fill="#e5e5e5" stroke="#f4500f" stroke-width="4"/>
          <path d="M1304 1090V1400M2301 1090V1400" stroke="#000" stroke-width="2"/>
          <path d="M1304 1090l-3 16h6zM2301 1090l-3 16h6z"/>
          <text x="1305" y="1123">#3</text>
          <text x="2302" y="1123">#4</text>
        </g>
      </svg>
      <div class="vsb big"><button class="gbtn" aria-label="Scroll up"><svg><use href="#i-up"/></svg></button><span class="gbtn thumb t20"></span><button class="gbtn" aria-label="Scroll down"><svg><use href="#i-down"/></svg></button></div>
    </div>
    <div class="floorbar">
      <i class="tri up"></i>
      <button class="ib" aria-label="Add floor"><svg class="ic"><use href="#i-plus"/></svg></button>
      <i class="tri lt"></i>
      <button class="floor">Main Floor</button>
      <i class="tri rt"></i>
      <div class="hsb pagesb"><button class="gbtn" aria-label="Scroll left"><svg class="h"><use href="#i-left"/></svg></button><span class="gbtn thumb h12"></span><button class="gbtn" aria-label="Scroll right"><svg class="h"><use href="#i-right"/></svg></button></div>
      <input class="zoomrange" type="range" min="0" max="100" value="63" aria-label="Zoom">
    </div>
    <footer class="status">
      <span class="ready">Ready</span>
      <label class="roomsel"><select aria-label="Room"><option>Rm1</option></select><svg><use href="#i-caret"/></svg></label>
      <output>Selected: 1 Area: 43.4807 SY Perimeter: 82'6"</output>
      <button class="ib" aria-label="Expand"><svg viewBox="0 0 26 26"><path d="M1 14L13 2l12 12M1 25l12-12 12 12" fill="none" stroke="#000" stroke-width="2"/></svg></button>
      <button class="ib" aria-label="Single pane"><svg viewBox="0 0 26 26"><path d="M1 1h24v24H1z" fill="none" stroke="#000" stroke-width="2"/></svg></button>
    </footer>
  </main>
  <div class="split"></div>

  <aside class="panel right">
    <header class="phead"><h2>Property View</h2><button class="ib" aria-label="Options"><svg><use href="#i-dd"/></svg></button><button class="ib" aria-label="Maximize"><svg><use href="#i-sq"/></svg></button><button class="ib" aria-label="Collapse"><svg><use href="#i-rr"/></svg></button></header>
    <div class="propbox">
      <h3>Many</h3>
      <div class="prow">
        <div class="plist">
          <div class="root"><i class="corner"></i></div>
          <table class="props">
            <tbody>
              <tr class="head"><th><i class="corner"></i>Wall</th><td><i class="tri down"></i></td></tr>
              <tr class="id"><th>Id</th><td><div class="idf"><input type="text" value="{MnXV8C2" aria-label="Wall id"><button aria-label="Copy wall id"><svg class="ic"><use href="#i-copy"/></svg></button></div></td></tr>
              <tr class="short"><th>Width</th><td class="ro">14'9"</td></tr>
              <tr><th>Height</th><td>9'10"</td></tr>
              <tr class="short"><th>Self Cove on This W...</th><td class="ck"><input type="checkbox" checked disabled aria-label="Self Cove on This Wall"></td></tr>
              <tr class="short"><th>Typical</th><td class="ck"><label><input type="checkbox">0 / 4</label></td></tr>
              <tr class="head"><th><i class="corner"></i>Room</th><td><i class="tri down"></i></td></tr>
              <tr class="id"><th>Id</th><td><div class="idf"><input type="text" value="{7UlpokZa" aria-label="Room id"><button aria-label="Copy room id"><svg class="ic"><use href="#i-copy"/></svg></button></div></td></tr>
              <tr><th>Name</th><td class="ck"><label class="roomsel"><select aria-label="Room name"><option>Rm1</option></select><svg><use href="#i-caret"/></svg></label></td></tr>
              <tr><th>Duplication</th><td>1</td></tr>
              <tr><th>Wall Height</th><td>9'10"</td></tr>
              <tr><th>Wall Thickness</th><td>5"</td></tr>
              <tr><th></th><td class="ck"><button class="more" aria-label="Wall options"></button></td></tr>
            </tbody>
          </table>
        </div>
        <div class="vsb"><button class="gbtn" aria-label="Scroll up"><svg><use href="#i-up"/></svg></button><span class="gbtn thumb t448"></span><button class="gbtn" aria-label="Scroll down"><svg><use href="#i-down"/></svg></button></div>
      </div>
      <div class="desc"></div>
    </div>
    <div class="dots">·····</div>
    <nav class="pnav">
      <button class="cur"><svg><use href="#i-pv"/></svg>Property View</button>
      <button><svg><use href="#i-ev"/></svg>Estimation View</button>
      <button><svg><use href="#i-rv"/></svg>Room View</button>
      <button><svg><use href="#i-tv"/></svg>Tab View</button>
      <div class="foot"></div>
    </nav>
  </aside>
</div>
<div class="desktop"></div>
</body>
</html>
```

FILE: styles.css
```css
* { box-sizing: border-box; }
body {
  margin: 0;
  height: 100vh;
  min-height: 1200px;
  display: flex;
  flex-direction: column;
  overflow: hidden;
  background: #f4f4f4;
  color: #000;
  font: 22px/28px "Open Sans", "Noto Sans", sans-serif;
}
button, select, input { font: inherit; color: inherit; margin: 0; }
button { background: none; border: 0; padding: 0; }
select { appearance: none; border: 0; background: none; padding: 0; border-radius: 0; }
h1, h2, h3, ul { margin: 0; padding: 0; font: inherit; }
svg { display: block; flex: none; }
.sprite { width: 0; height: 0; position: absolute; }
.ic { width: 32px; height: 32px; }
.ib { display: flex; align-items: center; flex: none; }
.tri { flex: none; display: inline-block; border: 6px solid transparent; border-top: 8px solid #000; border-bottom: 0; }
.tri.up { border-top: 0; border-bottom: 8px solid #000; }
.tri.lt { border: 7px solid transparent; border-right: 8px solid #000; border-left: 0; }
.tri.rt { border: 7px solid transparent; border-left: 8px solid #000; border-right: 0; }
.tri.wide { border: 7px solid transparent; border-top: 8px solid #000; border-bottom: 0; }
.tri.down { border: 9px solid transparent; border-top: 16px solid #808080; border-bottom: 0; }

/* title bar */
.titlebar { display: flex; height: 45px; align-items: center; padding-left: 6px; flex: none; }
.logo { width: 64px; height: 45px; }
.quick { display: flex; align-items: center; gap: 12px; height: 40px; margin: 0 12px 0 14px; padding: 3px 22px 0; border-left: 2px solid #8c8c8c; border-right: 2px solid #8c8c8c; align-self: flex-start; }
.quick .ic { width: 32px; height: 30px; }
.quick .help { gap: 6px; }
.titlebar h1 { font-size: 23px; }
.winctl { margin-left: auto; display: flex; gap: 72px; padding: 10px 36px 0 0; }
.winctl svg { width: 20px; height: 20px; }

/* tabs */
.tabs { display: flex; height: 49px; align-items: flex-end; flex: none; }
.file { width: 112px; height: 47px; margin-bottom: 2px; border: 2px solid #4a95cf; border-radius: 3px; background: linear-gradient(#a9cfee, #6db1e4 50%, #4a9bdb 51%, #7fc0ee); color: #fff; text-align: left; padding: 6px 0 0 16px; }
.file .tri { border-width: 8px 8px 0; border-top: 10px solid #fff; margin: 0 0 6px 10px; }
.tab { height: 47px; padding: 6px 16px 0 16px; border: 2px solid transparent; border-bottom: 0; margin-right: 14px; }
.t-info { margin: 0 12px; }
.tab.active { background: #fff; border-color: #d9d9d9; padding: 6px 19px 0; }
.tab { font-size: 23px; }
.t-info { font-size: 22px; }

/* ribbon */
.ribbon { display: flex; height: 181px; flex: none; background: linear-gradient(#fff, #f8f8f8 60%); border-top: 2px solid #d9d9d9; border-bottom: 2px solid #d2d2d2; padding-left: 2px; }
.group { flex: none; display: flex; flex-direction: column; justify-content: space-between; position: relative; height: 176px; }
.group::after { content: ""; position: absolute; right: 0; top: 13px; height: 149px; width: 2px; background: #d9d9d9; }
.group h2 { color: #a0a0a0; text-align: center; padding-bottom: 6px; }
.items { display: flex; padding-left: 8px; }
.tight .items { padding-left: 4px; }
.g-import { width: 282px; }
.g-room { width: 359px; }
.g-shape { width: 445px; }
.g-markup { width: 317px; }
.g-est { width: 388px; }
.g-layout { width: 418px; }
.g-zoom { width: 208px; }
.g-view { width: 264px; }
.g-edit { width: 485px; }
.lg { display: flex; flex-direction: column; align-items: center; padding-top: 14px; flex: none; align-self: flex-start; }
.lg svg { width: 60px; height: 60px; margin-bottom: 5px; }
.lg > .tri { margin-top: 6px; }
.two { display: flex; align-items: center; gap: 5px; line-height: 26px; }
.lg:disabled, .sm.off { color: #a0a0a0; }
.w86 { width: 86px; }
.w88 { width: 88px; }
.w90 { width: 90px; }
.w104 { width: 104px; }
.w110 { width: 110px; }
.stack { display: flex; flex-direction: column; align-items: flex-start; padding: 5px 0 0 10px; }
.s-elev { width: 173px; }
.stack.s-note { padding-left: 6px; }
.sm { display: flex; align-items: center; height: 44px; gap: 4px; white-space: nowrap; }
.sm .tri { margin-left: 18px; }
.sm.near .tri { margin-left: 4px; }
.sm.on { background: #cfe4fb; border: 2px solid #6aa2d4; border-radius: 4px; padding: 0 8px 0 4px; }
.sm.v { padding-left: 9px; }
.g-view .stack { padding-left: 3px; }
.g-zoom .stack { padding-left: 2px; }
.estbox { display: flex; flex-direction: column; gap: 4px; padding: 7px 0 0 5px; width: 265px; }
.prodsel { display: flex; align-items: center; height: 48px; border: 2px solid #acacac; background: linear-gradient(#f0f0f0, #e3e3e3); padding: 0 14px 0 10px; }
.prodsel select { flex: 1; min-width: 0; padding-left: 2px; }
.prodsel svg { width: 12px; height: 10px; margin-bottom: 4px; }
.esttools { display: flex; align-items: center; gap: 13px; height: 60px; border: 2px solid #dadada; border-radius: 5px; padding: 0 0 0 7px; }
.esttools svg { width: 42px; height: 42px; }
.zoomsel { width: 110px; height: 43px; }
.shapeedit { width: 87px; height: 166px; margin: 5px 6px; padding-top: 10px; border: 2px solid #d5d9de; border-radius: 4px; background: linear-gradient(#fff 48%, #f3f3f3 49%, #fafafa); }
.shapeedit svg { height: 64px; margin-bottom: 12px; }

.swatch { flex: none; width: 32px; height: 32px; display: block; }
.brown { background: #9b6238; border: 3px solid #000; }
.pink { background: #ffc0cb; }
.gray { background: #808080; }
.bordered { border: 2px solid #000; }

/* green controls */
.gbtn { flex: none; display: grid; place-items: center; width: 27px; height: 30px; border: 2px solid #8d9b78; border-radius: 4px; background: linear-gradient(90deg, #a6b891, #96a676); box-shadow: 0 0 0 2px #fff, 2px 2px 0 2px #8fa072; }
.gbtn svg { width: 18px; height: 14px; }
.gbtn svg.h { width: 14px; height: 18px; }
.combo { display: grid; border: 2px solid #a6b98c; background: #fff; align-items: center; }
.combo > * { grid-area: 1 / 1; }
.combo select { width: 100%; padding-left: 8px; }
.combo .gbtn { justify-self: end; box-shadow: none; width: 30px; height: 39px; margin-right: 2px; pointer-events: none; background: linear-gradient(#a6b891, #94a56f); }
.vsb { width: 36px; flex: none; display: flex; flex-direction: column; align-items: center; justify-content: space-between; padding: 4px 4px 3px 2px; background: linear-gradient(90deg, #f1efe9, #fff 60%); border-right: 2px solid #eee; }
.thumb::before { content: ""; width: 11px; height: 15px; background: repeating-linear-gradient(#c8db9f 0 2px, transparent 2px 4px); }
.hsb .thumb::before { width: 15px; height: 11px; background: repeating-linear-gradient(90deg, #c8db9f 0 2px, transparent 2px 4px); }
.hsb { display: flex; align-items: center; background: linear-gradient(#f1efe9, #fff 60%); }
.hsb .gbtn { width: 30px; height: 27px; }
.hsb .end { margin-left: auto; }
.hsb .h86 { width: 86px; }
.hsb .h12 { width: 12px; margin-left: 8px; }
.h12::before, .t20::before { display: none; }
.t44 { height: 44px; margin-bottom: 104px; }
.t74 { height: 60px; margin-bottom: 20px; }
.t20 { height: 18px; margin-bottom: 12px; }
.t448 { height: 480px; margin-bottom: 64px; }

/* workspace */
.workspace { flex: 1; min-height: 0; display: flex; border-bottom: 2px solid #b4bcc6; }
.split { width: 8px; flex: none; background: #d2d2d2; }
.panel { flex: none; display: flex; flex-direction: column; border: 2px solid #c8cad3; background: #fff; }
.left { width: 492px; }
.right { width: 511px; }
.phead { display: flex; align-items: center; height: 48px; flex: none; padding: 0 12px 0 8px; background: linear-gradient(90deg, #f3f3f3, #fff 50%, #f3f3f3); border-bottom: 2px solid #c8cad3; }
.phead h2 { margin-right: auto; font-size: 23px; }
.phead svg { width: 14px; height: 14px; margin-left: 24px; }
.dbrow { display: flex; flex: none; height: 48px; align-items: center; gap: 8px; padding-right: 6px; }
.dbrow .combo { flex: 1; height: 48px; }
.tools { display: flex; align-items: center; height: 45px; flex: none; padding: 0 4px 0 6px; }
.tools .ib:first-child { margin-right: 12px; }
.txt { width: 26px; margin-left: 6px; height: 24px; line-height: 24px; }
.tools input { flex: 1; min-width: 0; height: 40px; padding: 0 2px 4px; margin: 0 8px; border: 2px solid #abadb3; border-radius: 0; background: #fff; }
.tools input::placeholder { color: #a9a9a9; }
.tools .ib:last-child { margin-left: 12px; }
.second { border-top: 6px solid #d2d2d2; height: 50px; }
.second .ic { height: 32px; }
.tools .gap { margin-right: 12px; }
.tree { display: flex; flex: none; height: 266px; border: 2px solid #abadb3; border-bottom: 0; }
.tree ul { flex: 1; list-style: none; padding-top: 3px; overflow: hidden; }
.tree li { display: flex; align-items: center; height: 36px; white-space: pre; }
.ex { width: 18px; height: 18px; margin-right: 7px; }
.tree .ic { margin-right: 11px; }
.l1 { padding-left: 45px; }
.l2 { padding-left: 77px; }
.leaf { padding-left: 134px; gap: 2px; }
.leaf span { flex: 1; height: 32px; line-height: 32px; margin-right: 4px; }
.leaf.sel span { background: #b3b3b3; color: #fff; }
.products { flex: 1; min-height: 0; display: flex; flex-direction: column; border: 2px solid #828790; border-radius: 3px; padding: 1px 2px 0; }
.prow { flex: 1; min-height: 0; display: flex; }
.plist { flex: 1; min-width: 0; overflow: hidden; }
.products table { width: 100%; border-collapse: collapse; }
.products th { font-weight: 400; text-align: left; padding: 0 0 0 299px; height: 40px; border-bottom: 2px solid #e0e2e2; background: linear-gradient(#fff, #f7f9f9); }
.products td { padding: 0; }
.products td div { display: flex; align-items: center; height: 42px; gap: 2px; padding-left: 68px; white-space: pre; }
.products .sel div { height: 40px; color: #fff; border: 2px solid #cfcfcf; border-right: 0; margin: 1px 0; border-radius: 4px 0 0 4px; background: linear-gradient(#c9c9c9 50%, #b2b2b2 51%); padding-left: 41px; gap: 0; }
.products .sel .swatch { margin-right: 2px; }
.dim { color: #808080; }
.products .hsb { height: 36px; padding: 0 34px 2px 2px; gap: 6px; }
.dots { height: 12px; flex: none; line-height: 8px; text-align: center; font-weight: 700; border-top: 2px solid #c8cad3; background: #f4f4f4; }
.pnav { flex: none; display: flex; flex-direction: column; background: #f4f4f4; }
.pnav > * { height: 56px; border-top: 2px solid #c8cad3; display: flex; align-items: center; gap: 19px; padding: 2px 9px 0; font-weight: 700; font-size: 23px; flex: none; }
.pnav svg { width: 45px; height: 43px; }
.pnav .cur { background: #f0ffff; }
.pnav .foot { justify-content: flex-end; padding: 0 6px; }
.pnav .foot svg { width: 48px; height: 48px; }
.right .pnav > * { gap: 18px; padding-left: 8px; }

/* drawing area */
.center { flex: 1; min-width: 0; display: flex; flex-direction: column; background: #fff; }
.stagerow { flex: 1; min-height: 0; display: flex; }
.stage { flex: 1; min-width: 0; height: auto; background: #fff; overflow: hidden; font: 30px "DejaVu Sans", sans-serif; }
.grid { fill: none; stroke: #d8d8d8; stroke-width: 2; stroke-dasharray: 11 5; }
.axis { fill: none; stroke: #808080; stroke-width: 2; stroke-dasharray: 9 3 3 3; }
.ink { fill: none; stroke: #000; stroke-width: 2; }
.red { fill: #f01010; }
.vsb.big { width: 34px; border: 0; padding: 2px 4px 3px 2px; }
.floorbar { display: flex; height: 34px; flex: none; align-items: center; padding-left: 10px; }
.floorbar .ib { margin: 0 16px 0 16px; }
.floorbar .ic { width: 24px; height: 24px; }
.floor { color: #00008b; font-weight: 700; font-size: 23px; height: 34px; padding: 6px 13px 0 28px; border-right: 2px solid #b0b0b0; }
.floorbar .rt { margin: 0 6px 0 auto; }
.pagesb { width: 306px; height: 34px; padding: 0 0 0 2px; justify-content: space-between; border-left: 6px solid #d2d2d2; border-right: 6px solid #d2d2d2; background: #fff; }
.zoomrange { appearance: none; width: 280px; height: 34px; margin: 0 10px; background: none; }
.zoomrange::-webkit-slider-runnable-track { height: 6px; border-top: 2px solid #b5b8b5; background: #efece0; border-radius: 2px; }
.zoomrange::-webkit-slider-thumb { appearance: none; width: 20px; height: 36px; margin-top: -16px; border: 2px solid #8a9a9a; border-radius: 4px; background: linear-gradient(#58c858 6px, #f3f3f0 6px); }
.status { display: flex; height: 40px; flex: none; align-items: center; background: #f4f4f4; padding: 0 5px 0 2px; }
.ready { margin-right: auto; }
.roomsel { display: grid; align-items: center; background: #fff; border: 2px solid #abadb3; height: 38px; }
.roomsel > * { grid-area: 1 / 1; }
.roomsel select { width: 100%; padding-left: 9px; }
.roomsel svg { width: 12px; height: 10px; justify-self: end; margin-right: 12px; }
.status .roomsel { width: 239px; margin-right: 9px; }
.status .ib svg { width: 26px; height: 26px; margin-left: 7px; }
.status output { min-width: 473px; white-space: nowrap; font-size: 23px; }

/* property grid */
.propbox { flex: 1; min-height: 0; display: flex; flex-direction: column; border: 2px solid #a5a8b0; background: #f0f0f0; }
.propbox h3 { background: #ddd; height: 44px; line-height: 44px; padding-left: 12px; font-weight: 700; font-size: 23px; flex: none; }
.root { height: 36px; padding: 0 0 0 12px; }
.corner { display: inline-block; border-left: 11px solid transparent; border-bottom: 11px solid #000; }
.props { border-collapse: collapse; margin-left: 19px; background: #fff; width: calc(100% - 19px); table-layout: fixed; }
.props th { width: 299px; text-align: left; font-weight: 400; padding: 0 0 0 64px; white-space: nowrap; border-right: 2px solid #f0f0f0; }
.props td { padding: 0 0 0 10px; }
.props tr { height: 46px; border-bottom: 2px solid #f0f0f0; }
.props .head { height: 40px; border-bottom: 0; }
.props .head th { padding-left: 11px; }
.props .head .corner { margin: 0 12px 5px 0; }
.props .id { height: 54px; }
.props .short { height: 42px; }
.props .id td, .props .ck { padding: 0; }
.ro { color: #808080; }
.idf { display: flex; height: 52px; gap: 3px; align-items: center; padding-right: 2px; }
.idf input { width: 99px; height: 52px; border: 2px solid #abadb3; padding: 0 0 0 5px; border-radius: 0; }
.idf button { display: grid; place-items: center; flex: 1; height: 50px; border: 2px solid #4a7020; border-radius: 6px; background: linear-gradient(#fff, #f0ecdc); }
.ck > input, .ck label:not(.roomsel) { display: flex; align-items: center; gap: 4px; }
.ck input { appearance: none; width: 26px; height: 26px; border: 2px solid #1d4a7c; background: linear-gradient(135deg, #ddd, #fff); }
.ck input:disabled { border-color: #c9c7bb; background: #fff; display: grid; place-items: center; }
.ck input:disabled::before { content: ""; width: 8px; height: 14px; border: solid #c9c7bb; border-width: 0 4px 4px 0; transform: rotate(40deg); }
.ck .roomsel { height: 44px; }
.more { display: block; width: 100%; height: 40px; border: 2px solid #4a7020; border-radius: 6px; }
.propbox .vsb { width: 32px; border: 0; padding: 4px 2px 2px; }
.propbox .vsb .gbtn { min-height: 30px; }
.propbox .t448 { flex: 0 1 450px; margin-bottom: 56px; }
.desc { height: 88px; flex: none; background: #ddd; border-top: 7px solid #f0f0f0; }
.desktop { height: 9px; flex: none; background: linear-gradient(90deg, #e4effa, #d3e6f8 30%, #dcdcf5 60%, #d9e2f4); }
```
